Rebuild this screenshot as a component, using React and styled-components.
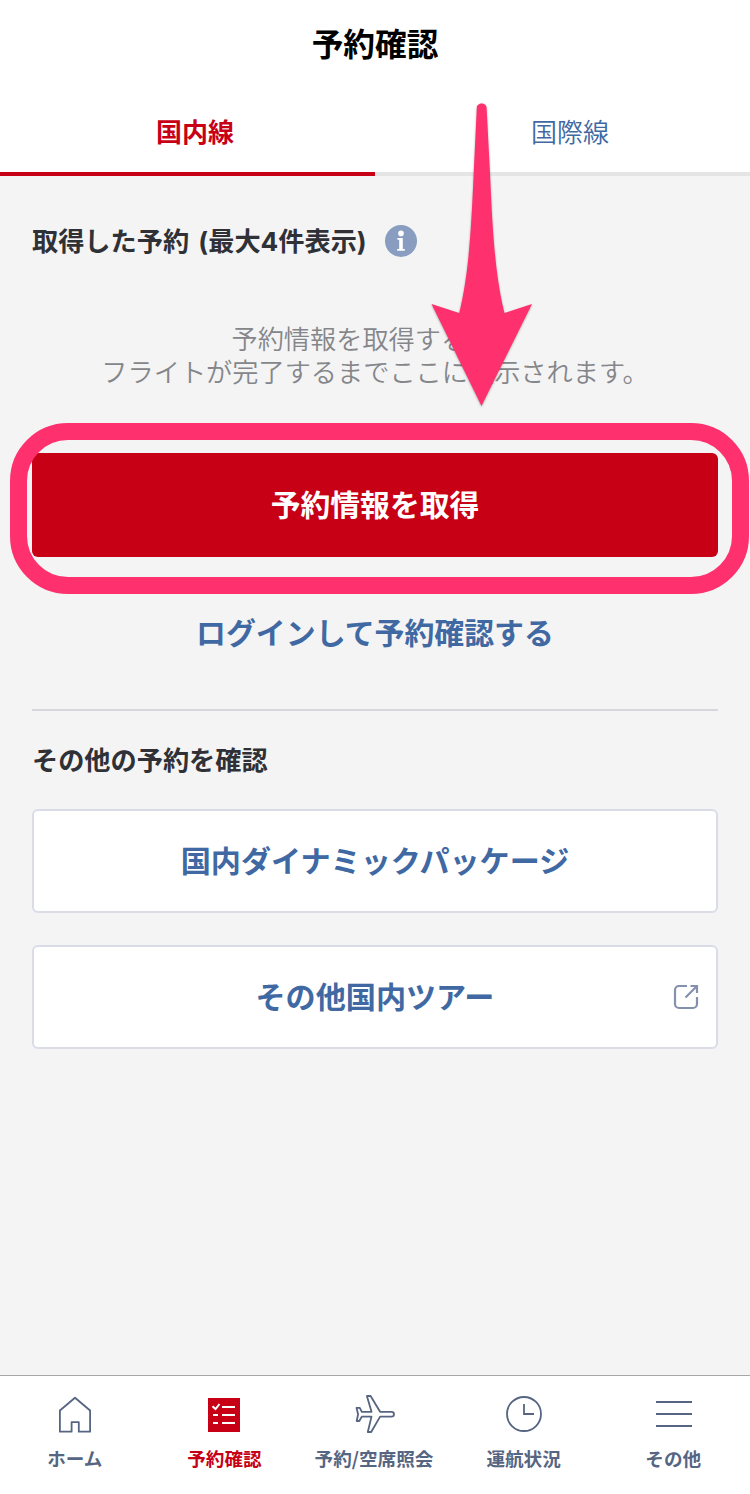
import React, { useState } from 'react';
import styled, { createGlobalStyle } from 'styled-components';

const GlobalStyle = createGlobalStyle`
  * {
    box-sizing: border-box;
  }

  body {
    margin: 0;
    background: #f4f4f4;
    font-family: "Noto Sans CJK JP", sans-serif;
    -webkit-font-smoothing: antialiased;
  }
`;

const Screen = styled.div`
  position: relative;
  display: flex;
  flex-direction: column;
  width: 750px;
  height: 1494px;
  overflow: hidden;
  background: #f4f4f4;
`;

const Header = styled.header`
  display: flex;
  align-items: center;
  justify-content: center;
  height: 90px;
  padding-bottom: 6px;
  background: #fff;
`;

const Title = styled.h1`
  margin: 0;
  font-size: 31.7px;
  line-height: 46px;
  font-weight: 700;
  color: #000;
`;

const Tabs = styled.div`
  display: flex;
  height: 86px;
  background: #fff;
`;

const Tab = styled.button`
  flex: 1;
  padding: 0 0 0 15px;
  border: none;
  border-bottom: 4px solid ${props => props.$active ? '#c70016' : '#e5e5e5'};
  background: none;
  color: ${props => props.$active ? '#c70016' : '#4069a3'};
  font-family: inherit;
  font-size: 26px;
  line-height: 38px;
  font-weight: ${props => props.$active ? 700 : 350};
  cursor: pointer;
`;

const Main = styled.main`
  flex: 1;
  padding: 0 32px;
`;

const SectionTitle = styled.h2`
  display: flex;
  align-items: center;
  gap: 18px;
  height: ${props => props.$top + 38}px;
  margin: 0;
  padding-top: ${props => props.$top}px;
  color: #2f3136;
  font-family: Inter, "Noto Sans CJK JP", sans-serif;
  font-size: 26.2px;
  line-height: 38px;
  font-weight: 700;
  word-spacing: 3px;
`;

const SectionText = styled.span`
  padding-top: 2px;
`;

const Description = styled.p`
  margin: 62px 0 0;
  text-align: center;
  color: #85868a;
  font-size: 26.2px;
  line-height: 33px;
  font-weight: 350;
`;

const PrimaryWrap = styled.div`
  position: relative;
  margin-top: 65px;
`;

const PrimaryButton = styled.button`
  display: block;
  width: 100%;
  height: 104px;
  padding: 0 0 4px;
  border: none;
  border-radius: 6px;
  background: #c70016;
  color: #fff;
  font-family: inherit;
  font-size: 29.8px;
  font-weight: 700;
  cursor: pointer;
`;

const Highlight = styled.div`
  position: absolute;
  top: -30px;
  right: -30.5px;
  bottom: -37px;
  left: -22px;
  border: 17px solid #ff306e;
  border-radius: 58px;
  pointer-events: none;
`;

const LoginLink = styled.a`
  display: block;
  margin-top: 52px;
  text-align: center;
  color: #4069a3;
  font-size: 29.9px;
  line-height: 44px;
  font-weight: 700;
  cursor: pointer;
`;

const Divider = styled.hr`
  height: 2px;
  margin: 56px 0 0;
  border: none;
  background: #d6d7db;
`;

const LinkList = styled.div`
  display: flex;
  flex-direction: column;
  gap: 32px;
  margin-top: 30px;
`;

const LinkButton = styled.button`
  display: grid;
  grid-template-columns: 44px 1fr 44px;
  align-items: center;
  height: 104px;
  padding: 0;
  border: 2px solid #dadce8;
  border-radius: 6px;
  background: #fff;
  color: #4069a3;
  font-family: inherit;
  font-size: 30.1px;
  font-weight: 700;
  cursor: pointer;
`;

const LinkText = styled.span`
  grid-column: 2;
  padding-bottom: 4px;
`;

const TabBar = styled.nav`
  display: grid;
  grid-template-columns: repeat(5, 1fr);
  height: 119px;
  padding: 0 2px 0 0;
  border-top: 1px solid #a7a7aa;
  background: #fff;
`;

const TabItem = styled.a`
  display: flex;
  flex-direction: column;
  align-items: center;
  padding-top: 16px;
  color: ${props => props.$active ? '#c70016' : '#566582'};
  font-size: 18.6px;
  line-height: 28px;
  font-weight: 700;
  white-space: nowrap;
  cursor: pointer;

  svg {
    margin-bottom: 8px;
  }
`;

const ArrowSvg = styled.svg`
  position: absolute;
  top: 90px;
  left: 410px;
  filter: drop-shadow(0 1px 1px rgba(0, 0, 0, 0.3));
  pointer-events: none;
`;

const InfoIcon = () => (
  <svg width="32" height="32" viewBox="0 0 32 32">
    <circle cx="16" cy="16" r="16" fill="#889dbf" />
    <circle cx="16" cy="8.4" r="2.8" fill="#fff" />
    <path d="M12.4 13h5.4v11h2v1.8h-7.6V24h2V14.8h-1.8z" fill="#fff" />
  </svg>
);

const ExternalIcon = () => (
  <svg width="28" height="28" viewBox="0 0 28 28" fill="none" stroke="#8390ae" strokeWidth="2.2">
    <path d="M15 3H7a4 4 0 0 0-4 4v14a4 4 0 0 0 4 4h14a4 4 0 0 0 4-4v-7" />
    <path d="M13.5 14.5L25 3M18.5 3H25v7" />
  </svg>
);

const HomeIcon = () => (
  <svg width="44" height="44" viewBox="0 0 44 44" fill="none" stroke="currentColor" strokeWidth="1.8">
    <path d="M6.9 18.5L22 5.7l15.1 12.8v21.2H25.8v-9.5h-7.2v9.5H6.9z" strokeLinejoin="round" />
  </svg>
);

const ListIcon = () => (
  <svg width="44" height="44" viewBox="0 0 44 44" fill="none" stroke="#fff" strokeWidth="2">
    <path d="M6 6h32v34H6z" fill="currentColor" stroke="none" />
    <path d="M10.5 14.2l3 2.8 4-5M20 15h13M11 23h5M20 23h13M11 31h5M20 31h13" />
  </svg>
);

const PlaneIcon = () => (
  <svg width="44" height="44" viewBox="0 0 44 44" fill="none" stroke="currentColor" strokeWidth="1.8" strokeLinejoin="round">
    <path d="M9.8 19.8h9.7L14.9 4h3.7l9.5 15.8h11.4c3.3 0 3.3 4.8 0 4.8H28.1L19.2 40h-3.4l3.7-15.4H9.8L7.3 29H4.7l1.4-6.8-1.6-6.4h3.3z" />
  </svg>
);

const ClockIcon = () => (
  <svg width="44" height="44" viewBox="0 0 44 44" fill="none" stroke="currentColor" strokeWidth="1.8">
    <circle cx="22" cy="22" r="17" />
    <path d="M22 12v10h10" />
  </svg>
);

const MenuIcon = () => (
  <svg width="44" height="44" viewBox="0 0 44 44" fill="none" stroke="currentColor" strokeWidth="2">
    <path d="M5 10h36M5 22h36M5 34h36" />
  </svg>
);

const Arrow = () => (
  <ArrowSvg width="150" height="330" viewBox="0 0 150 330">
    <path
      d="M66.8 18c0-6 9.8-6 9.8 0L80 83C82.5 140 85 185 94.5 223l27.5-9-50.5 102L21.5 214l27.7 9C58.7 185 61.2 140 63.7 83z"
      fill="#ff306e"
    />
  </ArrowSvg>
);

const navItems = [
  { label: 'ホーム', Icon: HomeIcon },
  { label: '予約確認', Icon: ListIcon, active: true },
  { label: '予約/空席照会', Icon: PlaneIcon },
  { label: '運航状況', Icon: ClockIcon },
  { label: 'その他', Icon: MenuIcon },
];

const App = () => {
  const [tab, setTab] = useState('国内線');

  return (
    <Screen>
      <GlobalStyle />
      <Header>
        <Title>予約確認</Title>
      </Header>
      <Tabs>
        {['国内線', '国際線'].map((name) => (
          <Tab key={name} $active={tab === name} onClick={() => setTab(name)}>
            {name}
          </Tab>
        ))}
      </Tabs>

      <Main>
        <SectionTitle $top={46}>
          <SectionText>取得した予約 (最大4件表示)</SectionText>
          <InfoIcon />
        </SectionTitle>
        <Description>
          予約情報を取得すると、
          <br />
          フライトが完了するまでここに表示されます。
        </Description>
        <PrimaryWrap>
          <PrimaryButton>予約情報を取得</PrimaryButton>
          <Highlight />
        </PrimaryWrap>
        <LoginLink>ログインして予約確認する</LoginLink>
        <Divider />
        <SectionTitle $top={30}>
          <SectionText>その他の予約を確認</SectionText>
        </SectionTitle>
        <LinkList>
          <LinkButton>
            <LinkText>国内ダイナミックパッケージ</LinkText>
          </LinkButton>
          <LinkButton>
            <LinkText>その他国内ツアー</LinkText>
            <ExternalIcon />
          </LinkButton>
        </LinkList>
      </Main>

      <TabBar>
        {navItems.map(({ label, Icon, active }) => (
          <TabItem key={label} $active={active}>
            <Icon />
            {label}
          </TabItem>
        ))}
      </TabBar>
      <Arrow />
    </Screen>
  );
};

export default App;
